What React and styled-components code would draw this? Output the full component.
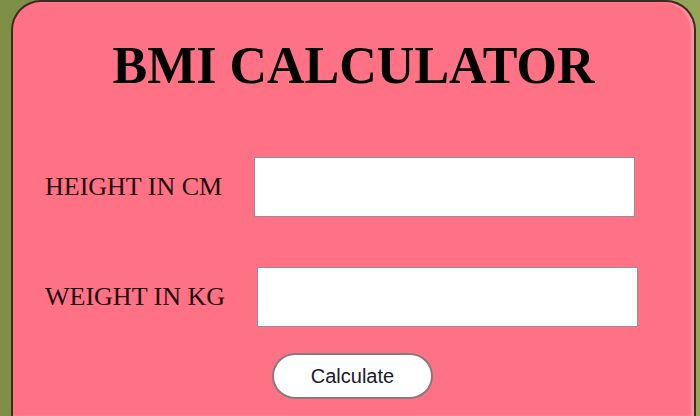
import React, {useState} from "react";
import styled, {createGlobalStyle} from "styled-components";

const GlobalStyle = createGlobalStyle`
  html, body {
    margin: 0;
    padding: 0;
    height: 100%;
  }
  body {
    background: linear-gradient(90deg, #7c8f44 0%, #8c9e52 40%, #94a65a 100%);
    font-family: "Liberation Serif", "Times New Roman", serif;
    overflow: hidden;
  }
`;

export default function App() {
  const [height, setHeight] = useState("");
  const [weight, setWeight] = useState("");

  function handleSubmit(event) {
    event.preventDefault();
  }

  return (
    <>
      <GlobalStyle />
      <StyledCard>
        <Title>BMI CALCULATOR</Title>
        <StyledForm onSubmit={handleSubmit}>
          <Row>
            <Label htmlFor="height">HEIGHT IN CM</Label>
            <Input
              id="height"
              type="text"
              value={height}
              onChange={e => setHeight(e.target.value)}
            />
          </Row>
          <Row>
            <Label htmlFor="weight">WEIGHT IN KG</Label>
            <Input
              id="weight"
              type="text"
              value={weight}
              onChange={e => setWeight(e.target.value)}
            />
          </Row>
          <CalcButton type="submit">Calculate</CalcButton>
        </StyledForm>
      </StyledCard>
    </>
  );
}

const StyledCard = styled.div`
  box-sizing: border-box;
  margin-left: 11px;
  width: 685px;
  height: 416px;
  background: #ff7286;
  border: 2px solid #3e2a22;
  border-bottom: none;
  border-radius: 30px 30px 0 0;
  box-shadow: inset -3px 0 2px rgba(255, 255, 255, 0.25);
  padding-top: 38px;
`;

const Title = styled.h1`
  margin: 0;
  text-align: center;
  font-size: 52px;
  line-height: 51px;
  font-weight: bold;
  color: #000;
`;

const StyledForm = styled.form`
  display: flex;
  flex-direction: column;
  padding: 66px 0 0 32px;
`;

const Row = styled.div`
  display: flex;
  align-items: center;
  gap: 32px;
  margin-bottom: 50px;

  &:nth-of-type(2) {
    margin-bottom: 26px;
  }
`;

const Label = styled.label`
  font-size: 26px;
  color: #1d0a0c;
  white-space: nowrap;
`;

const Input = styled.input`
  box-sizing: border-box;
  width: 381px;
  height: 60px;
  border: 1px solid #a08a98;
  background: #fff;
  outline: none;
`;

const CalcButton = styled.button`
  align-self: flex-start;
  margin-left: 227px;
  box-sizing: border-box;
  width: 161px;
  height: 46px;
  border: 2.5px solid #8a7a7c;
  border-radius: 23px;
  background: #fff;
  font-family: "Liberation Sans", Arial, sans-serif;
  font-size: 20px;
  color: #1a1a2a;
  cursor: pointer;
`;
